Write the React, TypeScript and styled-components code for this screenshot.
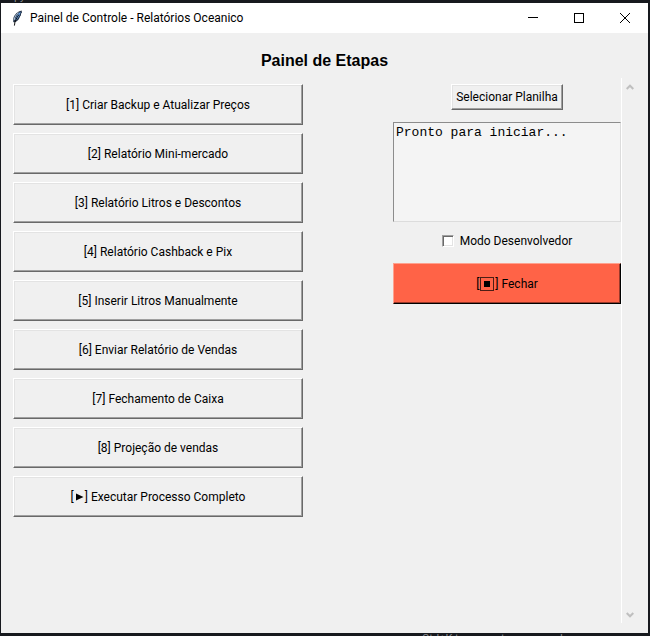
import React from 'react';
import styled, { createGlobalStyle } from 'styled-components';

const uiFont = 'Roboto, "Segoe UI", sans-serif';

const GlobalStyle = createGlobalStyle`
  * { box-sizing: border-box; }
  body { margin: 0; background: #17191e; font: 12px/16px ${uiFont}; color: #000; }
`;

const Desktop = styled.div`
  display: grid;
  grid-template-rows: 3px 1fr 3px;
  padding: 0 2px 0 1px;
  min-height: 100vh;
`;

const Backdrop = styled.div<{ $indent: number; $align: string }>`
  display: flex;
  align-items: ${p => p.$align};
  overflow: hidden;
  padding-left: ${p => p.$indent}px;
  color: #8a8d90;
  font-size: 11px;
  line-height: 12px;
`;

const Window = styled.main`
  display: flex;
  flex-direction: column;
  background: #f0f0f0;
`;

const TitleBar = styled.header`
  display: flex;
  align-items: center;
  height: 30px;
  padding-left: 8px;
  gap: 5px;
  background: #fff;
`;

const WindowTitle = styled.span`
  flex: 1;
`;

const WindowControls = styled.div`
  display: flex;
`;

const WindowButton = styled.button`
  display: flex;
  align-items: center;
  justify-content: center;
  width: 46px;
  height: 30px;
  padding: 0;
  border: 0;
  background: none;
`;

const Heading = styled.h1`
  margin: 0;
  padding: 19px 0 8px;
  font: bold 16px/18px "Liberation Sans", Arial, sans-serif;
  text-align: center;
`;

const ScrollArea = styled.div`
  display: flex;
  flex: 1;
  margin: 0 10px 10px;
`;

const Content = styled.div`
  display: grid;
  flex: 1;
  grid-template-columns: 290fr 228fr;
  column-gap: 90px;
  align-items: start;
  padding: 6px 0 0 2px;
`;

const Steps = styled.nav`
  display: flex;
  flex-direction: column;
  gap: 8px;
`;

const Side = styled.section`
  display: flex;
  flex-direction: column;
  align-items: center;
`;

const RaisedButton = styled.button`
  padding: 3px 4px;
  border: 1px solid;
  border-color: #fff #696969 #696969 #fff;
  border-radius: 0;
  box-shadow: inset -1px -1px #a0a0a0, inset 1px 1px #e3e3e3;
  background: #f0f0f0;
  color: #000;
  font: 12px/18px ${uiFont};
  white-space: nowrap;
`;

const StepButton = styled(RaisedButton)`
  display: flex;
  align-items: center;
  justify-content: center;
  height: 41px;
`;

const CloseButton = styled(StepButton)`
  align-self: stretch;
  border-color: #ffa18e #000 #000 #ffa18e;
  box-shadow: inset -1px -1px #98392a;
  background: #ff6347;
`;

const Log = styled.textarea`
  display: block;
  width: 100%;
  height: 100px;
  margin: 12px 0;
  padding: 1px 2px;
  border: 1px solid;
  border-color: #8c8c8c #dcdcdc #dcdcdc #8c8c8c;
  border-radius: 0;
  background: #f4f4f4;
  color: #000;
  font: 13px/18px "Liberation Mono", "Courier New", monospace;
  resize: none;
  outline: 0;
`;

const CheckLabel = styled.label`
  display: flex;
  align-items: center;
  gap: 6px;
  height: 13px;
  margin-bottom: 16px;
`;

const CheckBox = styled.input`
  appearance: none;
  width: 12px;
  height: 12px;
  margin: 0;
  border: 1px solid;
  border-color: #a0a0a0 #fff #fff #a0a0a0;
  box-shadow: inset 1px 1px #696969, inset -1px -1px #e3e3e3;
  background: #fff;
`;

const ScrollBar = styled.div`
  display: flex;
  flex-direction: column;
  justify-content: space-between;
  width: 17px;
  border-left: 1px solid #fff;
`;

const ArrowButton = styled.button`
  display: flex;
  align-items: center;
  justify-content: center;
  height: 17px;
  padding: 0;
  border: 0;
  background: none;
`;

const Mark = styled.svg`
  margin: 0 1px;
`;

const Feather = () => (
  <svg width="16" height="16" viewBox="0 0 16 16" aria-hidden="true">
    <path d="M12.6 .4C8.6 1.4 5.4 4.5 4.4 8L4.2 12L5.5 12.6C9 10.8 10.6 8.4 11 6.4L12 5.2L12 3.8L13 2.4Z" fill="#24344a" />
    <path d="M11.6 1.8C9 3.6 7 6.8 5.8 11C8.6 9.2 9.6 7.4 10.2 5.8L11 4.8L11.2 3.4Z" fill="#68a6ee" />
    <path d="M9.6 2.8C7 4.6 5.4 7 5.4 9.8" stroke="#b8cce2" fill="none" />
    <path d="M10 4.5C7.4 8 5.8 11 5.4 15.6" stroke="#111" fill="none" />
  </svg>
);

const BoxedSquare = () => (
  <Mark width="14" height="14" viewBox="0 0 14 14" aria-hidden="true">
    <rect x=".5" y=".5" width="13" height="13" fill="none" stroke="#4d1e15" />
    <rect x="4" y="4" width="6" height="6" />
  </Mark>
);

const PlayMark = () => (
  <Mark width="9" height="8" viewBox="0 0 9 8" aria-hidden="true">
    <path d="M1 .5L8.5 4L1 7.5Z" />
  </Mark>
);

const Chevron = ({ down }: { down?: boolean }) => (
  <svg width="8" height="6" viewBox="0 0 8 6" aria-hidden="true">
    <path d={down ? 'M.7 1L4 4.3L7.3 1' : 'M.7 5L4 1.7L7.3 5'} fill="none" stroke="#bfbfbf" strokeWidth="2" />
  </svg>
);

const steps = [
  'Criar Backup e Atualizar Preços',
  'Relatório Mini-mercado',
  'Relatório Litros e Descontos',
  'Relatório Cashback e Pix',
  'Inserir Litros Manualmente',
  'Enviar Relatório de Vendas',
  'Fechamento de Caixa',
  'Projeção de vendas',
];

export default function App() {
  return (
    <Desktop>
      <GlobalStyle />
      <Backdrop $indent={13} $align="flex-end">py</Backdrop>
      <Window>
        <TitleBar>
          <Feather />
          <WindowTitle>Painel de Controle - Relatórios Oceanico</WindowTitle>
          <WindowControls>
            <WindowButton aria-label="Minimizar">
              <svg width="10" height="10"><path d="M0 4.5H10" stroke="#000" /></svg>
            </WindowButton>
            <WindowButton aria-label="Maximizar">
              <svg width="10" height="10"><rect x=".5" y=".5" width="9" height="9" fill="none" stroke="#000" /></svg>
            </WindowButton>
            <WindowButton aria-label="Fechar janela">
              <svg width="10" height="10"><path d="M0 0L10 10M10 0L0 10" stroke="#000" /></svg>
            </WindowButton>
          </WindowControls>
        </TitleBar>
        <Heading>Painel de Etapas</Heading>
        <ScrollArea>
          <Content>
            <Steps>
              {steps.map((s, i) => <StepButton key={s}>[{i + 1}] {s}</StepButton>)}
              <StepButton>[<PlayMark />]&nbsp;Executar Processo Completo</StepButton>
            </Steps>
            <Side>
              <RaisedButton>Selecionar Planilha</RaisedButton>
              <Log aria-label="Registro" defaultValue="Pronto para iniciar..." readOnly />
              <CheckLabel><CheckBox type="checkbox" />Modo Desenvolvedor</CheckLabel>
              <CloseButton>[<BoxedSquare />]&nbsp;Fechar</CloseButton>
            </Side>
          </Content>
          <ScrollBar>
            <ArrowButton aria-label="Rolar para cima"><Chevron /></ArrowButton>
            <ArrowButton aria-label="Rolar para baixo"><Chevron down /></ArrowButton>
          </ScrollBar>
        </ScrollArea>
      </Window>
      <Backdrop $indent={421} $align="flex-start">Ctrl+K to generate command</Backdrop>
    </Desktop>
  );
}
